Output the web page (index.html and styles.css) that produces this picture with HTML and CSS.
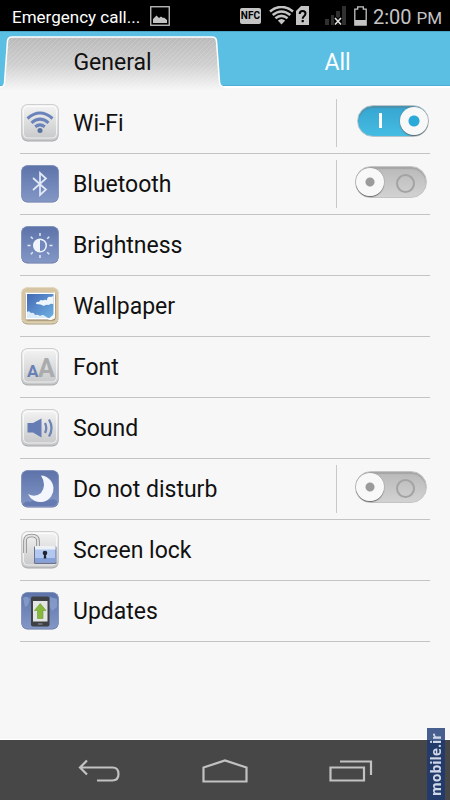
FILE: index.html
```html
<!DOCTYPE html>
<html lang="en">
<head>
<meta charset="UTF-8">
<meta name="viewport" content="width=device-width, initial-scale=1.0">
<title>Settings</title>
<link rel="stylesheet" href="styles.css">
</head>
<body>
<!-- Shared gradients -->
<svg class="defs" width="0" height="0" aria-hidden="true">
    <defs>
        <linearGradient id="light" x1="0" y1="0" x2="0" y2="1">
            <stop offset="0" stop-color="#f4f4f4"/>
            <stop offset="1" stop-color="#c6c7c8"/>
        </linearGradient>
        <linearGradient id="blue" x1="0" y1="0" x2="0" y2="1">
            <stop offset="0" stop-color="#5d73a9"/>
            <stop offset="1" stop-color="#8397c6"/>
        </linearGradient>
        <linearGradient id="sky" x1="0" y1="0" x2="1" y2="1">
            <stop offset="0" stop-color="#4469b5"/>
            <stop offset="1" stop-color="#6fb1e2"/>
        </linearGradient>
        <linearGradient id="tabfill" x1="0" y1="0" x2="0" y2="1">
            <stop offset="0" stop-color="#bababa"/>
            <stop offset="0.5" stop-color="#cfcfcf"/>
            <stop offset="1" stop-color="#f7f7f7"/>
        </linearGradient>
        <pattern id="stripes" width="5" height="5" patternUnits="userSpaceOnUse">
            <path d="M-1 6L6 -1M-1 1L1 -1M4 6L6 4" stroke="#fff" stroke-opacity="0.16"/>
        </pattern>
        <g id="light-tile">
            <rect x="0.5" y="0.5" width="37" height="37" rx="6" fill="#a9aaac"/>
            <rect x="0.5" y="0.5" width="37" height="35.5" rx="6" fill="url(#light)" stroke="#c9cacb" stroke-width="0.8"/>
            <rect x="2.5" y="2.5" width="33" height="31.5" rx="4" fill="none" stroke="#fff" stroke-opacity="0.7"/>
        </g>
        <g id="blue-tile">
            <rect x="0.5" y="0.5" width="37" height="37" rx="6" fill="#586c9f"/>
            <rect x="0.5" y="0.5" width="37" height="36" rx="6" fill="url(#blue)" stroke="#8394bd" stroke-width="0.8"/>
        </g>
    </defs>
</svg>

<header class="status-bar">
    <span class="carrier">Emergency call...</span>
    <svg class="status-picture" width="20" height="20" viewBox="0 0 20 20" aria-hidden="true">
        <rect x="0.75" y="0.75" width="18.5" height="18.5" fill="none" stroke="#c4c4c4" stroke-width="1.3"/>
        <path d="M3 17V13L6.5 9.5L9 12L11 10.5L13 12L14 11.5L17 14V17Z" fill="#c4c4c4"/>
    </svg>
    <div class="status-icons">
        <span class="nfc">NFC</span>
        <svg class="status-wifi" width="25" height="19" viewBox="0 0 25 19" aria-hidden="true">
            <path d="M12.5 18.5L8.8 14.5Q12.5 11.5 16.2 14.5Z" fill="#c4c4c4"/>
            <path d="M1 5.5Q12.5 -3.5 24 5.5M3.7 9Q12.5 2 21.3 9M6.4 12.3Q12.5 7.4 18.6 12.3" fill="none" stroke="#c4c4c4" stroke-width="2.6"/>
        </svg>
        <svg class="status-sim" width="14" height="19" viewBox="0 0 14 19" aria-hidden="true">
            <path d="M5 0H13V19H0V5Z" fill="#c4c4c4"/>
            <path d="M3.7 8Q3.7 5 6.6 5Q9.5 5 9.5 7.6Q9.5 9 8 10.2Q6.7 11.2 6.7 12.7" fill="none" stroke="#000" stroke-width="2"/>
            <rect x="5.6" y="14" width="2.2" height="2.2" fill="#000"/>
        </svg>
        <svg class="status-signal" width="21" height="20" viewBox="0 0 21 20" aria-hidden="true">
            <path d="M0 13H4V19H0ZM6 9H9V19H6ZM11 5H15V19H11ZM17 0H21V19H17Z" fill="#303030"/>
            <path d="M10 12L16 18.5M16 12L10 18.5" stroke="#000" stroke-width="4"/>
            <path d="M10 12L16 18.5M16 12L10 18.5" stroke="#e4e4e4" stroke-width="1.6"/>
        </svg>
        <svg class="status-battery" width="13" height="20" viewBox="0 0 13 20" aria-hidden="true">
            <path d="M0.8 3.2H3.7V0.8H9.3V3.2H12.2V19H0.8Z" fill="none" stroke="#c4c4c4" stroke-width="1.3"/>
            <rect x="1" y="14" width="11" height="5" fill="#c4c4c4"/>
        </svg>
        <span class="clock">2:00 <small>PM</small></span>
    </div>
</header>

<div class="tabs" role="tablist">
    <button class="tab active" role="tab" aria-selected="true">
        <svg class="tab-shape" viewBox="0 0 225 55" preserveAspectRatio="none" aria-hidden="true">
            <path d="M0 51Q4 51 4.5 47L7.5 5Q8 1 12 1H212Q216 1 216.5 5L219.5 46Q220 51 225 51V55H0Z" fill="url(#tabfill)"/>
            <path d="M0 51Q4 51 4.5 47L7.5 5Q8 1 12 1H212Q216 1 216.5 5L219.5 46Q220 51 225 51V55H0Z" fill="url(#stripes)"/>
            <path d="M0 51Q4 51 4.5 47L7.5 5Q8 1 12 1H212Q216 1 216.5 5L219.5 46Q220 51 225 51" fill="none" stroke="#fff" stroke-width="1.5"/>
        </svg>
        <span class="tab-label">General</span>
    </button>
    <button class="tab" role="tab" aria-selected="false"><span class="tab-label">All</span></button>
</div>

<main class="settings">
    <ul class="settings-list">
        <li class="row">
            <label class="row-main" for="wifi">
                <svg class="icon" viewBox="0 0 38 38" aria-hidden="true">
                    <use href="#light-tile"/>
                    <g fill="none" stroke="#6a83bb" stroke-width="3">
                        <path d="M6.5 14.5Q19 3.5 31.5 14.5"/>
                        <path d="M10.5 18.8Q19 11.5 27.5 18.8"/>
                        <path d="M14.2 22.8Q19 19 23.8 22.8"/>
                    </g>
                    <circle cx="19" cy="26.5" r="2.5" fill="#59719f"/>
                </svg>
                <span>Wi-Fi</span>
            </label>
            <div class="row-switch"><input class="switch" type="checkbox" id="wifi" checked></div>
        </li>
        <li class="row">
            <label class="row-main" for="bluetooth">
                <svg class="icon" viewBox="0 0 38 38" aria-hidden="true">
                    <use href="#blue-tile"/>
                    <path d="M12 13L25 24.5L19 30V8L25 13.5L12 25" fill="none" stroke="#e3e9f7" stroke-width="1.7"/>
                </svg>
                <span>Bluetooth</span>
            </label>
            <div class="row-switch"><input class="switch" type="checkbox" id="bluetooth"></div>
        </li>
        <li class="row">
            <a class="row-main" href="#">
                <svg class="icon" viewBox="0 0 38 38" aria-hidden="true">
                    <use href="#blue-tile"/>
                    <circle cx="19" cy="19.5" r="7" fill="#f1f4fb"/>
                    <path d="M19 14A5.5 5.5 0 0 1 19 25Z" fill="#7188bf"/>
                    <path d="M19 7V10M19 29V32M6.5 19.5H9.5M28.5 19.5H31.5M9.8 10.8L11.8 12.8M26.2 26.2L28.2 28.2M9.8 28.2L11.8 26.2M26.2 12.8L28.2 10.8" stroke="#e3e9f7" stroke-width="1.5"/>
                </svg>
                <span>Brightness</span>
            </a>
        </li>
        <li class="row">
            <a class="row-main" href="#">
                <svg class="icon" viewBox="0 0 38 38" aria-hidden="true">
                    <rect x="0.5" y="0.5" width="37" height="37" rx="6" fill="#a99a7c"/>
                    <rect x="0.5" y="0.5" width="37" height="35.5" rx="6" fill="#d5c5a2" stroke="#e5dac0"/>
                    <rect x="4" y="5.5" width="30.5" height="28" rx="3" fill="#8b7c60"/>
                    <path d="M4.5 5.5H34V30L31 32.5H4.5Z" fill="#fff"/>
                    <path d="M6 7H32.5V28L28.5 31H6Z" fill="url(#sky)"/>
                    <path d="M15 17Q15 14 18 15Q19 12 22 13.5Q24 12 26 13.5Q26 9 30 10L32.5 9V17Q29 16 28 18Q25 17 23 19Q20 17 15 17Z" fill="#eef6fc"/>
                    <path d="M6 25Q8 23 10 26Q13 25 14 28Q17 27 19 29Q22 27 24 29L27 31H6Z" fill="#dcecf8"/>
                    <path d="M34 25Q32 29 27 33Q33 33 34 31Z" fill="#f7f7f4"/>
                </svg>
                <span>Wallpaper</span>
            </a>
        </li>
        <li class="row">
            <a class="row-main" href="#">
                <svg class="icon" viewBox="0 0 38 38" aria-hidden="true">
                    <use href="#light-tile"/>
                    <text class="letter letter-small" x="6" y="29">A</text>
                    <text class="letter letter-big" x="17" y="29">A</text>
                </svg>
                <span>Font</span>
            </a>
        </li>
        <li class="row">
            <a class="row-main" href="#">
                <svg class="icon" viewBox="0 0 38 38" aria-hidden="true">
                    <use href="#light-tile"/>
                    <path d="M6.5 14H12L20.5 9.5V28.5L12 23.5H6.5Z" fill="#657db4"/>
                    <path d="M24 14Q26.5 19 24 24M28 10.5Q33 19 28 27.5" fill="none" stroke="#6e85b8" stroke-width="2.3"/>
                </svg>
                <span>Sound</span>
            </a>
        </li>
        <li class="row">
            <label class="row-main" for="dnd">
                <svg class="icon" viewBox="0 0 38 38" aria-hidden="true">
                    <use href="#blue-tile"/>
                    <path d="M2 34Q5 30 9 32Q13 29 16 31Q24 32 29 30Q33 28 36 31V33Q35 36 31 36H7Q3 36 2 34Z" fill="#667bb0"/>
                    <path d="M20 5.5A13.3 13.3 0 1 1 7 24Q14 28 20 23Q26 15 20 5.5Z" fill="#f3f6fd"/>
                </svg>
                <span>Do not disturb</span>
            </label>
            <div class="row-switch"><input class="switch" type="checkbox" id="dnd"></div>
        </li>
        <li class="row">
            <a class="row-main" href="#">
                <svg class="icon" viewBox="0 0 38 38" aria-hidden="true">
                    <use href="#light-tile"/>
                    <path d="M4 22V10Q4 4.5 10.5 4.5Q17 4.5 17 10V15" fill="none" stroke="#8d8d8d" stroke-width="3.6"/>
                    <path d="M4 22V10Q4 4.5 10.5 4.5Q17 4.5 17 10V15" fill="none" stroke="#e3e3e3" stroke-width="1.8"/>
                    <rect x="13" y="15" width="22.5" height="18" rx="1.5" fill="#68738f"/>
                    <rect x="14" y="15.5" width="20.5" height="16" fill="#b3c8f0"/>
                    <rect x="14" y="15" width="20.5" height="3.5" fill="#edf0f5"/>
                    <rect x="14" y="27" width="20.5" height="4" fill="#87a2da"/>
                    <circle cx="24" cy="22" r="2.3" fill="#202430"/>
                    <path d="M23.2 22H24.8L25.3 27.5H22.7Z" fill="#202430"/>
                </svg>
                <span>Screen lock</span>
            </a>
        </li>
        <li class="row">
            <a class="row-main" href="#">
                <svg class="icon" viewBox="0 0 38 38" aria-hidden="true">
                    <use href="#blue-tile"/>
                    <path d="M2 6Q6 3 9 7L7 13L4 15ZM29 5L36 7V15L31 19L28 13Z" fill="#90a4d0" fill-opacity="0.7"/>
                    <rect x="10" y="4.5" width="18.5" height="30" rx="2" fill="#3e4044"/>
                    <rect x="12" y="9" width="14.5" height="20.5" fill="#e3e5e4"/>
                    <path d="M19.2 11.5L25 18.5H22V26.5H16.5V18.5H13.5Z" fill="#87b83d" stroke="#6c9a2d" stroke-width="0.6"/>
                    <path d="M17 32H21.5" stroke="#97999c"/>
                </svg>
                <span>Updates</span>
            </a>
        </li>
    </ul>
</main>

<nav class="nav-bar">
    <button class="nav-btn" aria-label="Back">
        <svg width="44" height="24" viewBox="0 0 44 24" aria-hidden="true">
            <path d="M10 1.5L3 8.5L10 15.5M3 8.5H35.5Q41.5 8.5 41.5 15Q41.5 21.5 35.5 21.5H20" fill="none" stroke="#c2c2c2" stroke-width="2.2"/>
        </svg>
    </button>
    <button class="nav-btn" aria-label="Home">
        <svg width="46" height="24" viewBox="0 0 46 24" aria-hidden="true">
            <path d="M1.5 8.5L23 1.5L44.5 8.5V22.5H1.5Z" fill="none" stroke="#c2c2c2" stroke-width="2.2"/>
        </svg>
    </button>
    <button class="nav-btn" aria-label="Recent apps">
        <svg width="44" height="24" viewBox="0 0 44 24" aria-hidden="true">
            <path d="M1.5 8.5H35V21.5H1.5ZM11 2.5H42V16" fill="none" stroke="#c2c2c2" stroke-width="2.2"/>
        </svg>
    </button>
</nav>

<div class="watermark">mobile.ir</div>
</body>
</html>
```
FILE: styles.css
```css
* {
    box-sizing: border-box;
}

body {
    margin: 0;
    min-height: 100vh;
    display: flex;
    flex-direction: column;
    font-family: Roboto, "Liberation Sans", sans-serif;
    color: #111;
    background-color: #f7f7f7;
}

button {
    border: none;
    background: none;
    padding: 0;
    font-family: inherit;
    cursor: pointer;
}

.defs {
    position: absolute;
}

/* Status bar */
.status-bar {
    display: flex;
    align-items: center;
    height: 31px;
    padding: 0 8px 0 12px;
    background: #000;
    color: #fff;
}

.carrier {
    padding-top: 2px;
    font-size: 17px;
    white-space: nowrap;
}

.status-picture {
    margin-left: 10px;
}

.status-icons {
    display: flex;
    align-items: center;
    margin-left: auto;
    color: #c4c4c4;
}

.nfc {
    width: 21px;
    height: 16px;
    border-radius: 2px;
    background: #c4c4c4;
    color: #000;
    font: bold 10px/16px Roboto, sans-serif;
    text-align: center;
}

.status-wifi {
    margin-left: 8px;
}

.status-sim {
    margin-left: 2px;
}

.status-signal {
    margin-left: 15px;
}

.status-battery {
    margin-left: 8px;
}

.clock {
    margin-left: 6px;
    padding-top: 3px;
    font-size: 20px;
    line-height: 24px;
    white-space: nowrap;
}

.clock small {
    font-size: 17px;
}

/* Tabs */
.tabs {
    display: flex;
    height: 55px;
    background: #5bbfe4;
    border-top: 1px solid #4aa5c8;
    border-bottom: 1px solid #4bb0d8;
}

.tab {
    position: relative;
    flex: 1;
    padding-top: 8px;
    color: #fff;
    font-size: 23px;
}

.tab.active {
    color: #111;
}

.tab-label {
    position: relative;
}

.tab-shape {
    position: absolute;
    top: 4px;
    left: 0;
    width: 100%;
    height: 55px;
}

/* Settings list */
.settings {
    flex: 1;
    padding: 5px 20px 0;
    border-top: 2px solid #fff;
    border-bottom: 1px solid #fff;
}

.settings-list {
    list-style: none;
    margin: 0;
    padding: 0;
}

.row {
    display: flex;
    align-items: center;
    height: 61px;
    border-bottom: 1px solid #c4c4c4;
}

.row-main {
    flex: 1;
    display: flex;
    align-items: center;
    gap: 14px;
    padding-left: 1px;
    color: #111;
    font-size: 23px;
    text-decoration: none;
}

.icon {
    width: 38px;
    height: 38px;
}

.letter {
    font-family: Roboto, sans-serif;
    font-weight: bold;
}

.letter-big {
    font-size: 25px;
    fill: #a9abad;
}

.letter-small {
    font-size: 17px;
    fill: #6780b5;
}

.row-switch {
    width: 94px;
    height: 48px;
    padding: 6px 0 0 18px;
    border-left: 1px solid #c9c9c9;
}

.switch {
    appearance: none;
    position: relative;
    display: block;
    width: 72px;
    height: 32px;
    margin: 0;
    border: 1px solid #c4c4c4;
    border-radius: 16px;
    background: linear-gradient(#b9b9b9, #d2d2d2);
    box-shadow: inset 0 2px 1px #a6a6a6;
    cursor: pointer;
}

.switch::before {
    content: "";
    position: absolute;
    top: 1px;
    left: 0;
    width: 28px;
    height: 28px;
    border-radius: 50%;
    background: radial-gradient(circle, #9b9b9b 4px, #f8f8f8 5px);
    box-shadow: 0 1px 1px #666, 0 0 1px #777;
}

.switch::after {
    content: "";
    position: absolute;
    top: 7px;
    left: 40px;
    width: 15px;
    height: 15px;
    border: 2px solid #a3a3a3;
    border-radius: 50%;
}

.switch:checked {
    left: 2px;
    border-color: #b9c5ca;
    background: linear-gradient(#35a5cf, #46bce3);
    box-shadow: inset 0 2px 1px #4d92ac;
}

.switch:checked::before {
    left: 42px;
    background: radial-gradient(circle, #2ba9d8 5px, #f8f8f8 6px);
}

.switch:checked::after {
    left: 21px;
    width: 3px;
    border: none;
    border-radius: 0;
    background: #fff;
}

/* Navigation bar */
.nav-bar {
    display: flex;
    justify-content: space-between;
    align-items: center;
    height: 60px;
    padding: 2px 77px 0;
    background: #474747;
}

.nav-btn svg {
    display: block;
}

.watermark {
    position: fixed;
    right: 5px;
    bottom: 0;
    width: 18px;
    height: 72px;
    padding-top: 4px;
    background: rgba(25, 56, 116, 0.8);
    color: #d0d8e8;
    font: bold 14px/18px "Open Sans", sans-serif;
    writing-mode: vertical-rl;
    transform: rotate(180deg);
}
```
